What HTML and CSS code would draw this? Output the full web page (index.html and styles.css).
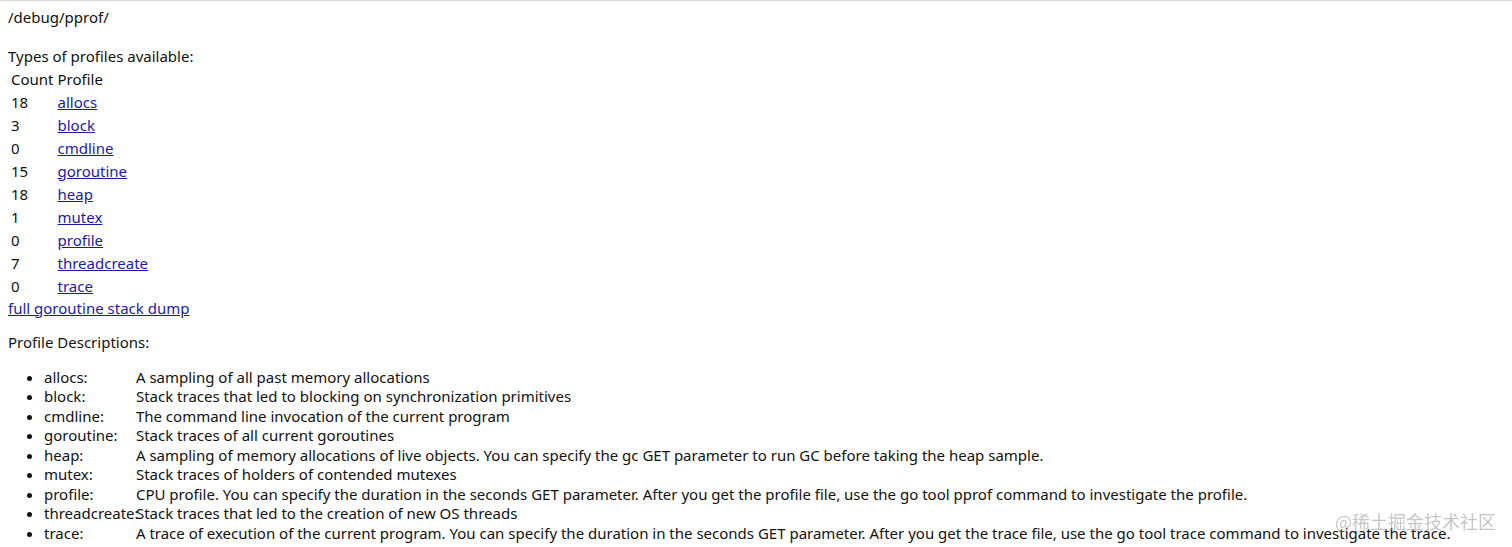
FILE: index.html
```html
<!DOCTYPE html>
<html class="doc">
<head>
<meta charset="utf-8">
<title>/debug/pprof/</title>
<link rel="stylesheet" href="styles.css">
</head>
<body class="page">
/debug/pprof/<br>
<br>
Types of profiles available:
<table class="profiles">
<thead><tr><td>Count</td><td>Profile</td></tr></thead>
<tbody>
<tr><td>18</td><td><a class="lnk" href="#">allocs</a></td></tr>
<tr><td>3</td><td><a class="lnk" href="#">block</a></td></tr>
<tr><td>0</td><td><a class="lnk" href="#">cmdline</a></td></tr>
<tr><td>15</td><td><a class="lnk" href="#">goroutine</a></td></tr>
<tr><td>18</td><td><a class="lnk" href="#">heap</a></td></tr>
<tr><td>1</td><td><a class="lnk" href="#">mutex</a></td></tr>
<tr><td>0</td><td><a class="lnk" href="#">profile</a></td></tr>
<tr><td>7</td><td><a class="lnk" href="#">threadcreate</a></td></tr>
<tr><td>0</td><td><a class="lnk" href="#">trace</a></td></tr>
</tbody>
</table>
<a class="lnk" href="#">full goroutine stack dump</a>
<br>
<p class="para">Profile Descriptions:</p>
<ul class="desc">
<li><div class="profile-name">allocs:</div> A sampling of all past memory allocations</li>
<li><div class="profile-name">block:</div> Stack traces that led to blocking on synchronization primitives</li>
<li><div class="profile-name">cmdline:</div> The command line invocation of the current program</li>
<li><div class="profile-name">goroutine:</div> Stack traces of all current goroutines</li>
<li><div class="profile-name">heap:</div> A sampling of memory allocations of live objects. You can specify the gc GET parameter to run GC before taking the heap sample.</li>
<li><div class="profile-name">mutex:</div> Stack traces of holders of contended mutexes</li>
<li><div class="profile-name">profile:</div> CPU profile. You can specify the duration in the seconds GET parameter. After you get the profile file, use the go tool pprof command to investigate the profile.</li>
<li><div class="profile-name">threadcreate:</div> Stack traces that led to the creation of new OS threads</li>
<li><div class="profile-name">trace:</div> A trace of execution of the current program. You can specify the duration in the seconds GET parameter. After you get the trace file, use the go tool trace command to investigate the trace.</li>
</ul>
<div class="watermark">@稀土掘金技术社区</div>
</body>
</html>
```
FILE: styles.css
```css
.doc {
  border-top: 1px solid #d6d6d6;
  background: #fff;
}
.page {
  margin: 7px 8px;
  font-family: "Noto Sans", "Noto Sans CJK SC", sans-serif;
  font-size: 15px;
  line-height: 19.5px;
  color: #111;
}
.profiles {
  border-spacing: 2px;
  font-size: 15px;
}
.profiles td {
  padding: 1px;
  line-height: 19px;
}
.lnk {
  color: #1a1aa6;
  text-decoration: underline;
}
.para {
  margin: 15px 0;
}
.desc {
  margin: 15px 0;
  padding-left: 36px;
}
.desc li {
  line-height: 19.5px;
}
.profile-name {
  display: inline-block;
  width: 88px;
}
.watermark {
  position: fixed;
  right: 16px;
  bottom: 16px;
  font-size: 18px;
  color: rgba(150, 150, 150, 0.55);
  font-family: "Noto Sans CJK SC", sans-serif;
}
```
